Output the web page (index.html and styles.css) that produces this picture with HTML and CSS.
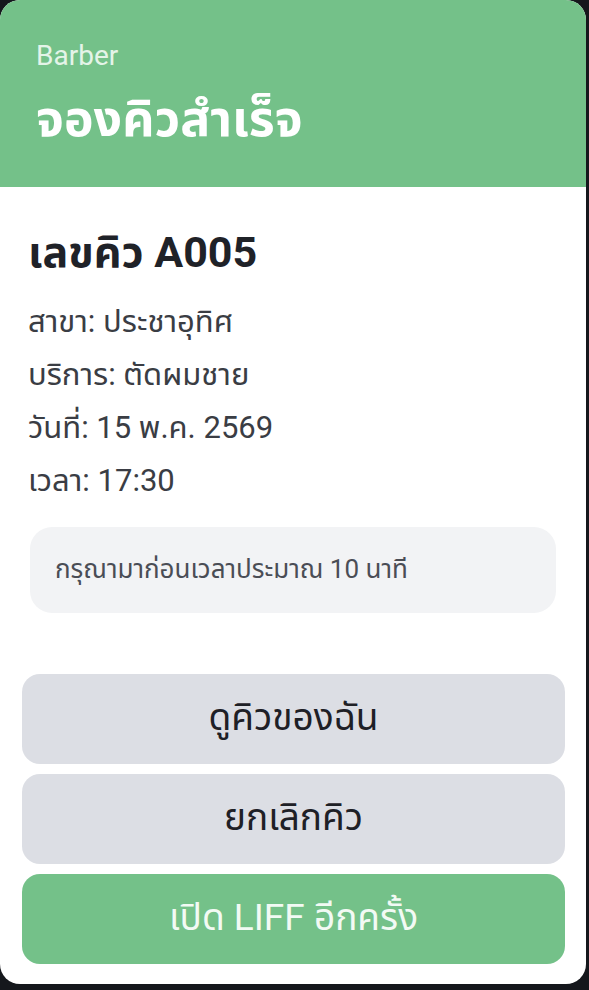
FILE: index.html
```html
<!DOCTYPE html>
<html lang="th">
<head>
  <meta charset="UTF-8">
  <meta name="viewport" content="width=device-width, initial-scale=1">
  <title>จองคิวสำเร็จ</title>
  <link rel="stylesheet" href="styles.css">
</head>
<body>
  <div class="card">
    <!-- Header -->
    <div class="card-header">
      <div class="shop-name">Barber</div>
      <h1 class="title">จองคิวสำเร็จ</h1>
    </div>

    <!-- Booking details -->
    <div class="card-body">
      <h2 class="queue-no">เลขคิว A005</h2>
      <p class="detail">สาขา: ประชาอุทิศ</p>
      <p class="detail">บริการ: ตัดผมชาย</p>
      <p class="detail">วันที่: 15 พ.ค. 2569</p>
      <p class="detail">เวลา: 17:30</p>

      <div class="note">กรุณามาก่อนเวลาประมาณ 10 นาที</div>
    </div>

    <!-- Actions -->
    <div class="actions">
      <button type="button" class="btn btn-gray">ดูคิวของฉัน</button>
      <button type="button" class="btn btn-gray">ยกเลิกคิว</button>
      <button type="button" class="btn btn-green">เปิด LIFF อีกครั้ง</button>
    </div>
  </div>
</body>
</html>
```

FILE: styles.css
```css
body {
  margin: 0;
  background-color: #15171c;
  font-family: Roboto, "Noto Sans Thai", "Noto Sans", sans-serif;
  width: 589px;
  height: 990px;
  overflow: hidden;
}
.card {
  width: 586px;
  height: 984px;
  background: #fff;
  border-radius: 20px;
  overflow: hidden;
  display: flex;
  flex-direction: column;
}
.card-header {
  background-color: #74c189;
  height: 187px;
  box-sizing: border-box;
  padding: 37px 36px 0;
  color: #fff;
}
.shop-name {
  font-size: 28px;
  line-height: 38px;
  color: #e4f4e8;
}
.title {
  margin: 12px 0 0;
  font-size: 50px;
  line-height: 64px;
  font-weight: bold;
}
.card-body {
  padding: 40px 28px 0;
}
.queue-no {
  margin: 0 0 18px;
  font-size: 43px;
  line-height: 50px;
  font-weight: bold;
  color: #1f2228;
}
.detail {
  margin: 0;
  font-size: 31px;
  line-height: 53px;
  color: #3a3d44;
}
.note {
  margin: 20px 2px 0;
  background-color: #f2f3f5;
  border-radius: 22px;
  height: 86px;
  box-sizing: border-box;
  padding: 0 25px;
  display: flex;
  align-items: center;
  font-size: 26px;
  color: #4a4d55;
}
.actions {
  margin-top: auto;
  padding: 0 21px 20px 22px;
  display: flex;
  flex-direction: column;
  gap: 10px;
}
.btn {
  height: 90px;
  border: none;
  border-radius: 18px;
  font-family: inherit;
  font-size: 37px;
  cursor: pointer;
}
.btn-gray {
  background-color: #dcdee4;
  color: #1e2026;
}
.btn-green {
  background-color: #74c189;
  color: #f2faf4;
}
```
